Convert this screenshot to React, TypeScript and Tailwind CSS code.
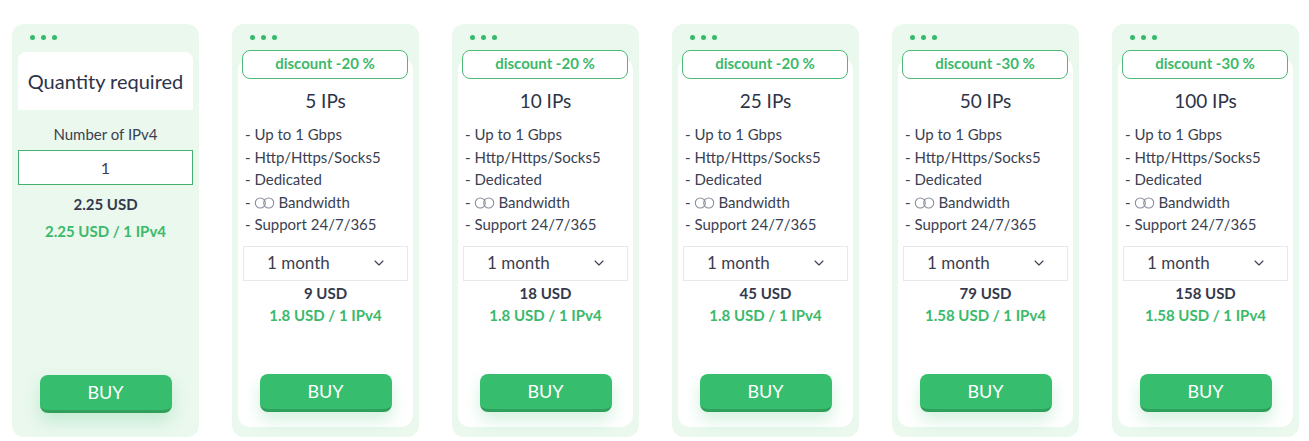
import { ChevronDown } from 'lucide-react'

const PLANS = [
  { ips: 5, discount: 20, total: '9', per: '1.8' },
  { ips: 10, discount: 20, total: '18', per: '1.8' },
  { ips: 25, discount: 20, total: '45', per: '1.8' },
  { ips: 50, discount: 30, total: '79', per: '1.58' },
  { ips: 100, discount: 30, total: '158', per: '1.58' },
]

function Dots() {
  return (
    <div className="flex gap-[6px] pl-[18px] mt-[11px] h-[5px]">
      <span className="w-[5px] h-[5px] rounded-full bg-[#37b96a]" />
      <span className="w-[5px] h-[5px] rounded-full bg-[#37b96a]" />
      <span className="w-[5px] h-[5px] rounded-full bg-[#37b96a]" />
    </div>
  )
}

function Infinity() {
  return (
    <svg width="21" height="12" viewBox="0 0 21 12" className="inline-block mr-[3px] align-[-1px]">
      <circle cx="6.3" cy="6" r="5" fill="none" stroke="#8a8f9c" strokeWidth="1.1" />
      <circle cx="14.7" cy="6" r="5" fill="none" stroke="#8a8f9c" strokeWidth="1.1" />
    </svg>
  )
}

function BuyButton() {
  return (
    <button className="w-[132px] h-[38px] rounded-[8px] bg-[#37bd6e] border-b-[3px] border-[#2f9f5c] text-white text-[18px] shadow-[0_8px_16px_rgba(56,189,110,0.22)] mx-auto">
      BUY
    </button>
  )
}

function QuantityCard() {
  return (
    <div className="w-[187px] h-[413px] shrink-0 rounded-[12px] bg-[#eaf8ee] flex flex-col">
      <Dots />
      <div className="mx-[6px] mt-[12px] h-[58px] bg-white rounded-t-[8px] flex items-center justify-center text-[20px] text-[#2d3348] pb-[1px]">
        Quantity required
      </div>
      <div className="text-center text-[15px] text-[#3a3f51] mt-[13px] leading-[22px]">Number of IPv4</div>
      <div className="mx-[6px] mt-[5px] h-[35px] bg-white border border-[#46b06f] flex items-center justify-center text-[16px] text-[#3a3f51]">
        1
      </div>
      <div className="text-center text-[15px] font-bold text-[#343a4d] mt-[8px] leading-[22px]">2.25 USD</div>
      <div className="text-center text-[15px] font-bold text-[#3cb96a] mt-[5px] leading-[22px]">2.25 USD / 1 IPv4</div>
      <div className="mt-auto mb-[24px] flex">
        <BuyButton />
      </div>
    </div>
  )
}

function PlanCard({ ips, discount, total, per }: (typeof PLANS)[number]) {
  return (
    <div className="w-[187px] h-[413px] shrink-0 rounded-[12px] bg-[#eaf8ee] flex flex-col pb-[10px]">
      <Dots />
      <div className="mx-[6px] mt-[18px] flex-1 bg-white rounded-[12px] flex flex-col">
        <div className="-mt-[8px] ml-[4px] mr-[5px] h-[29px] bg-white border border-[#4dbb76] rounded-[8px] flex items-center justify-center text-[15px] font-bold text-[#3cb96a] pb-[3px]">
          discount -{discount} %
        </div>
        <div className="text-center text-[19px] text-[#2d3348] mt-[10px] leading-[24px]">{ips} IPs</div>
        <ul className="pl-[7px] mt-[10px] text-[15px] leading-[22.5px] text-[#3a3f51]">
          <li>- Up to 1 Gbps</li>
          <li>- Http/Https/Socks5</li>
          <li>- Dedicated</li>
          <li>
            - <Infinity />Bandwidth
          </li>
          <li>- Support 24/7/365</li>
        </ul>
        <div className="mx-[5px] mt-[10px] h-[35px] border border-[#e6e8ec] flex items-center justify-between pl-[23px] pr-[20px] text-[17px] text-[#3a3f51]">
          <span>1 month</span>
          <ChevronDown size={16} strokeWidth={1.6} className="text-[#3a3f51]" />
        </div>
        <div className="text-center text-[15px] font-bold text-[#343a4d] mt-[1px] leading-[22px]">{total} USD</div>
        <div className="text-center text-[15px] font-bold text-[#3cb96a] leading-[22px]">{per} USD / 1 IPv4</div>
        <div className="mt-auto mb-[15px] flex">
          <BuyButton />
        </div>
      </div>
    </div>
  )
}

export default function App() {
  return (
    <div className="w-[1309px] h-[441px] bg-white flex gap-[33px] pl-[12px] pt-[24px]" style={{ fontFamily: 'Lato, "Open Sans", sans-serif' }}>
      <QuantityCard />
      {PLANS.map((p) => (
        <PlanCard key={p.ips} {...p} />
      ))}
    </div>
  )
}
